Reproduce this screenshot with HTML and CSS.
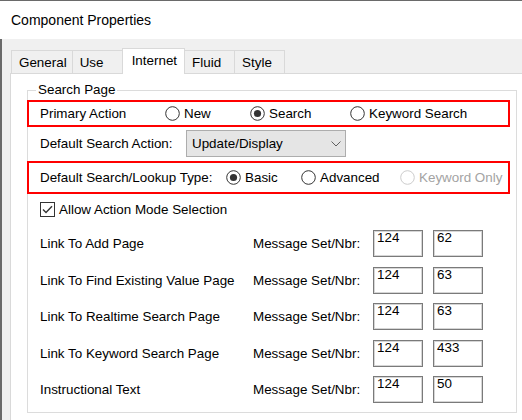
FILE: index.html
```html
<!DOCTYPE html>
<html>
<head>
<meta charset="utf-8">
<title>Component Properties</title>
<link rel="stylesheet" href="styles.css">
</head>
<body>
<div class="window">
  <div class="titlebar">Component Properties</div>
  <div class="main">
    <div class="tabs">
      <div class="tab">General</div>
      <div class="tab">Use</div>
      <div class="tab tab-active">Internet</div>
      <div class="tab">Fluid</div>
      <div class="tab">Style</div>
    </div>
    <div class="panel">
      <fieldset class="group">
        <legend>Search Page</legend>
        <div class="hl hl-primary">
          <span class="lbl lbl-primary">Primary Action</span>
          <span class="opt opt-new"><svg class="radio" viewBox="0 0 15 15"><circle cx="7.5" cy="7.5" r="6.8" fill="#fff" stroke="#333" stroke-width="1"/></svg>New</span>
          <span class="opt opt-search"><svg class="radio" viewBox="0 0 15 15"><circle cx="7.5" cy="7.5" r="6.8" fill="#fff" stroke="#333" stroke-width="1"/><circle cx="7.5" cy="7.5" r="3.6" fill="#333"/></svg>Search</span>
          <span class="opt"><svg class="radio" viewBox="0 0 15 15"><circle cx="7.5" cy="7.5" r="6.8" fill="#fff" stroke="#333" stroke-width="1"/></svg>Keyword Search</span>
        </div>
        <div class="row-select">
          <span class="lbl lbl-action">Default Search Action:</span>
          <div class="select">
            <span>Update/Display</span>
            <svg class="chev" viewBox="0 0 10 6"><path d="M0.5 0.5 L5 5 L9.5 0.5" fill="none" stroke="#606060" stroke-width="1"/></svg>
          </div>
        </div>
        <div class="hl hl-lookup">
          <span class="lbl lbl-lookup">Default Search/Lookup Type:</span>
          <span class="opt opt-basic"><svg class="radio" viewBox="0 0 15 15"><circle cx="7.5" cy="7.5" r="6.8" fill="#fff" stroke="#333" stroke-width="1"/><circle cx="7.5" cy="7.5" r="3.6" fill="#333"/></svg>Basic</span>
          <span class="opt opt-adv"><svg class="radio" viewBox="0 0 15 15"><circle cx="7.5" cy="7.5" r="6.8" fill="#fff" stroke="#333" stroke-width="1"/></svg>Advanced</span>
          <span class="opt opt-disabled"><svg class="radio" viewBox="0 0 15 15"><circle cx="7.5" cy="7.5" r="6.8" fill="#fff" stroke="#cccccc" stroke-width="1"/></svg>Keyword Only</span>
        </div>
        <div class="check-row">
          <svg class="check" viewBox="0 0 15 15"><rect x="0.5" y="0.5" width="14" height="14" fill="#fff" stroke="#333" stroke-width="1"/><path d="M3 7.6 L6 10.6 L12 4.2" fill="none" stroke="#333" stroke-width="1.4"/></svg>
          <span>Allow Action Mode Selection</span>
        </div>
        <div class="links">
          <div class="link-row">
            <span class="link-label">Link To Add Page</span>
            <span class="msg">Message Set/Nbr:</span>
            <div class="tb">124</div>
            <div class="tb tb-nbr">62</div>
          </div>
          <div class="link-row">
            <span class="link-label">Link To Find Existing Value Page</span>
            <span class="msg">Message Set/Nbr:</span>
            <div class="tb">124</div>
            <div class="tb tb-nbr">63</div>
          </div>
          <div class="link-row">
            <span class="link-label">Link To Realtime Search Page</span>
            <span class="msg">Message Set/Nbr:</span>
            <div class="tb">124</div>
            <div class="tb tb-nbr">63</div>
          </div>
          <div class="link-row">
            <span class="link-label">Link To Keyword Search Page</span>
            <span class="msg">Message Set/Nbr:</span>
            <div class="tb">124</div>
            <div class="tb tb-nbr">433</div>
          </div>
          <div class="link-row">
            <span class="link-label">Instructional Text</span>
            <span class="msg">Message Set/Nbr:</span>
            <div class="tb">124</div>
            <div class="tb tb-nbr">50</div>
          </div>
        </div>
      </fieldset>
    </div>
  </div>
</div>
</body>
</html>
```

FILE: styles.css
```css
html, body {
  margin: 0;
  padding: 0;
}

body {
  width: 522px;
  height: 420px;
  overflow: hidden;
  background: #f0f0f0;
  font-family: "Liberation Sans", Arial, sans-serif;
  font-size: 13.4px;
  color: #000;
}

.window {
  width: 522px;
  height: 420px;
  overflow: hidden;
}

.titlebar {
  height: 38px;
  border-top: 1px solid #6a6a6a;
  background: #fff;
  padding-left: 11px;
  font-size: 14px;
  display: flex;
  align-items: center;
}

.main {
  border-left: 2px solid #6a6a6a;
  padding: 9px 0 0 8px;
  height: 381px;
  box-sizing: border-box;
}

.tabs {
  display: flex;
  align-items: flex-end;
  height: 25px;
  padding-left: 1px;
  position: relative;
  z-index: 1;
}

.tab {
  height: 23px;
  box-sizing: border-box;
  min-width: 51px;
  border: 1px solid #d9d9d9;
  border-bottom: 0;
  background: #f0f0f0;
  padding: 0 5px 0 7px;
  margin-left: -1px;
  display: flex;
  align-items: center;
  white-space: nowrap;
}

.tab:first-child {
  margin-left: 0;
}

.tab-active {
  height: 26px;
  background: #fff;
  margin-bottom: -1px;
  padding: 0 7px 2px 9px;
  position: relative;
  z-index: 2;
}

.panel {
  width: 520px;
  height: 360px;
  box-sizing: border-box;
  background: #fff;
  border: 1px solid #d9d9d9;
}

.group {
  margin: 8px 0 0 16px;
  padding: 0 0 9px 0;
  border: 1px solid #dcdcdc;
  width: 490px;
  box-sizing: border-box;
  min-width: 0;
}

.group legend {
  margin-left: 8px;
  padding: 0 2px;
  line-height: 16px;
}

.hl {
  border: 2px solid #ff0000;
  margin-left: -1px;
  width: 483px;
  box-sizing: border-box;
  display: flex;
  align-items: center;
  padding-left: 11px;
}

.hl-primary {
  height: 27px;
  margin-top: 2px;
}

.hl-lookup {
  height: 33px;
  margin-top: 4px;
}

.lbl {
  white-space: nowrap;
}

.lbl-primary {
  width: 125px;
}

.lbl-action {
  width: 146px;
}

.lbl-lookup {
  width: 186px;
}

.opt {
  display: flex;
  align-items: center;
  gap: 4px;
  white-space: nowrap;
}

.opt-new {
  width: 85px;
}

.opt-search {
  width: 100px;
}

.opt-basic {
  width: 75px;
}

.opt-adv {
  width: 99px;
}

.opt-disabled {
  color: #a3a3a3;
}

.radio {
  width: 15px;
  height: 15px;
  flex: none;
}

.row-select {
  display: flex;
  align-items: center;
  height: 27px;
  margin-top: 3px;
  padding-left: 12px;
}

.select {
  width: 160px;
  height: 27px;
  box-sizing: border-box;
  border: 1px solid #adadad;
  background: #e5e5e5;
  display: flex;
  align-items: center;
  justify-content: space-between;
  padding: 0 4px 0 5px;
}

.chev {
  width: 10px;
  height: 6px;
}

.check-row {
  display: flex;
  align-items: center;
  gap: 4px;
  height: 15px;
  margin-top: 8px;
  padding-left: 12px;
}

.check {
  width: 15px;
  height: 15px;
  flex: none;
}

.links {
  display: flex;
  flex-direction: column;
  gap: 9.6px;
  margin-top: 13px;
  padding-left: 12px;
}

.link-row {
  display: flex;
  align-items: center;
  height: 27px;
}

.link-label {
  width: 213px;
  white-space: nowrap;
}

.msg {
  width: 120px;
  white-space: nowrap;
}

.tb {
  width: 50px;
  height: 27px;
  box-sizing: border-box;
  border: 1px solid #7a7a7a;
  box-shadow: inset 0 0 0 1px #d6d6d6;
  padding: 0 3px;
  line-height: 13px;
  align-self: flex-start;
}

.tb-nbr {
  margin-left: 10px;
}
```
